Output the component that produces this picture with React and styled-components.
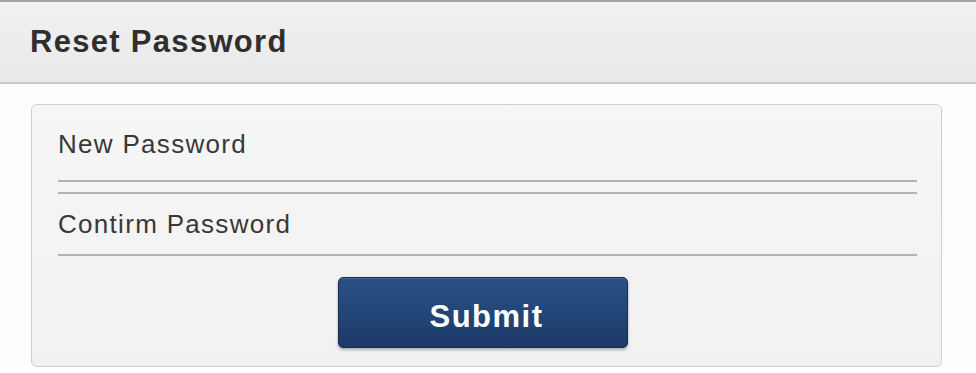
import React from 'react';
import styled, { createGlobalStyle } from 'styled-components';

const GlobalStyle = createGlobalStyle`
    html, body {
        margin: 0;
        padding: 0;
        background: #ffffff;
        font-family: "Liberation Sans", Arial, sans-serif;
    }
`;

const Page = styled.div`
    width: 976px;
    height: 373px;
    display: flex;
    flex-direction: column;
    background: #fdfdfd;
    overflow: hidden;
`;

const Header = styled.header`
    height: 80px;
    display: flex;
    align-items: center;
    padding-left: 30px;
    border-top: 2px solid #9ea3ab;
    border-bottom: 2px solid #c9c9c9;
    background: linear-gradient(#f1f1f1, #e9e9e9);
`;

const Title = styled.h1`
    margin: 0;
    font-size: 31px;
    font-weight: bold;
    letter-spacing: 1.3px;
    color: #2f2f2f;
`;

const Body = styled.main`
    flex: 1;
    padding: 20px 34px 6px 31px;
    display: flex;
`;

const Card = styled.form`
    flex: 1;
    display: flex;
    flex-direction: column;
    padding: 0 24px 18px 26px;
    border: 1px solid #cfcfcf;
    border-radius: 6px;
    background: linear-gradient(#f6f6f6, #f1f1f1);
`;

const Field = styled.div`
    padding: ${props => props.first ? '24px 0 21px' : '15px 0'};
    border-top: ${props => props.first ? 'none' : '2px solid #b3b3b3'};
    border-bottom: 2px solid #b3b3b3;
    margin-top: ${props => props.first ? '0' : '10px'};
`;

const Label = styled.div`
    font-size: 26px;
    line-height: 30px;
    letter-spacing: 1.3px;
    color: #383838;
`;

const Actions = styled.div`
    display: flex;
    justify-content: center;
    margin-top: 21px;
    padding-right: 9px;
`;

const SubmitButton = styled.button`
    width: 290px;
    height: 71px;
    padding: 8px 0 0 7px;
    border: 1px solid #172c4c;
    border-radius: 5px;
    background: linear-gradient(#2a5087, #234678 50%, #1c3a66);
    box-shadow: 0 2px 3px rgba(0, 0, 0, 0.28), inset 0 1px 0 rgba(255, 255, 255, 0.12);
    color: #ffffff;
    font-family: "Liberation Sans", Arial, sans-serif;
    font-size: 31px;
    font-weight: bold;
    letter-spacing: 1.5px;
    cursor: pointer;
`;

const App = () => {
    return <Page>
        <GlobalStyle />
        <Header>
            <Title>Reset Password</Title>
        </Header>
        <Body>
            <Card onSubmit={e => e.preventDefault()}>
                <Field first>
                    <Label>New Password</Label>
                </Field>
                <Field>
                    <Label>Contirm Password</Label>
                </Field>
                <Actions>
                    <SubmitButton type="submit">Submit</SubmitButton>
                </Actions>
            </Card>
        </Body>
    </Page>
}

export default App;
